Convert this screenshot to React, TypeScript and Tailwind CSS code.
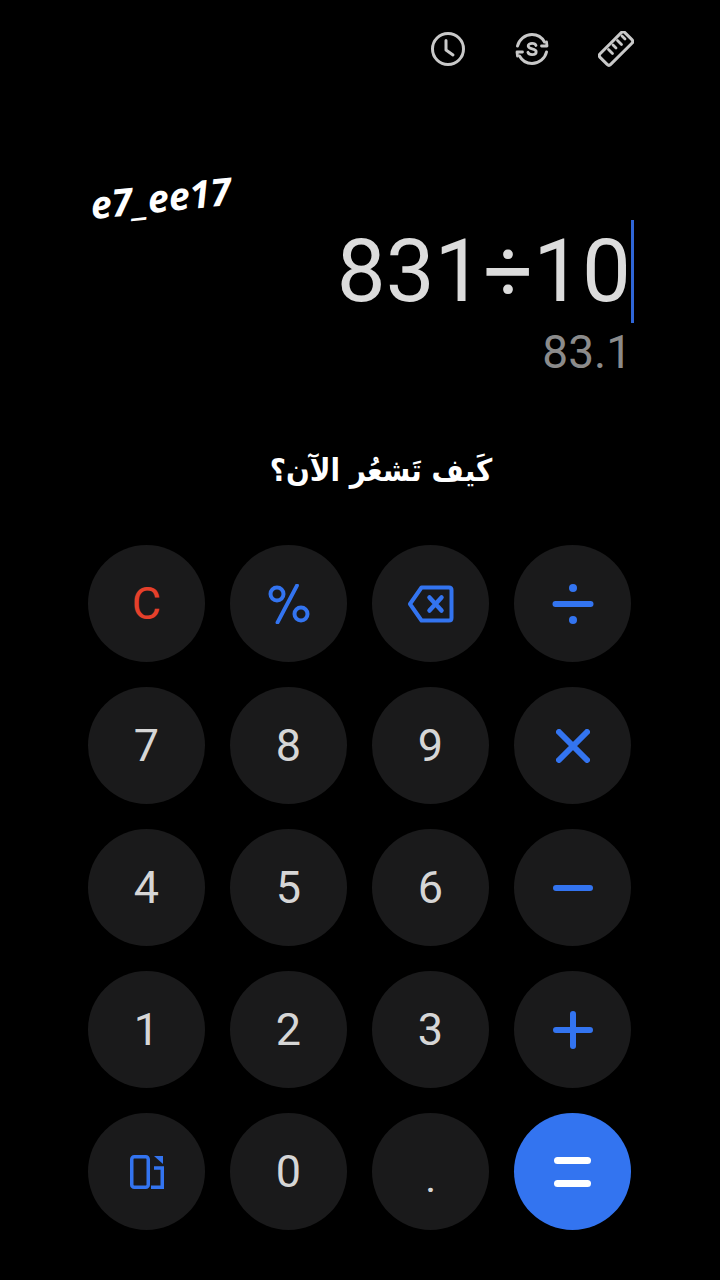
import type { ReactNode } from "react";

const BLUE = "#3374f0";

const IconStroke = ({ children, size = 36, vb = 36 }: { children: ReactNode; size?: number; vb?: number }) => (
  <svg width={size} height={size} viewBox={`0 0 ${vb} ${vb}`} fill="none" stroke="currentColor" strokeLinecap="round" strokeLinejoin="round">
    {children}
  </svg>
);

function ClockIcon() {
  return (
    <IconStroke>
      <circle cx="18" cy="18" r="15.5" strokeWidth="3" />
      <path d="M16 9.500V19l7 5" strokeWidth="3" />
    </IconStroke>
  );
}

function CurrencyIcon() {
  return (
    <IconStroke>
      <path d="M3.500 15C5 8.500 11 3.500 18 3.500c5.500 0 10 3 12.500 7.500" strokeWidth="3" />
      <path d="M27.500 15h5.500l-.5-4" strokeWidth="2.800" />
      <path d="M32.500 21C31 27.500 25 32.500 18 32.500c-5.500 0-10-3-12.500-7.500" strokeWidth="3" />
      <path d="M8.500 21H3l.5 4" strokeWidth="2.800" />
      <path d="M22 14.500c-.4-1.300-1.900-2.100-3.900-2.100-2.300 0-3.900 1.100-3.900 2.700 0 3.600 8 1.900 8 5.600 0 1.700-1.700 2.900-4.100 2.900-2.100 0-3.700-.8-4.200-2.300" strokeWidth="2.800" />
    </IconStroke>
  );
}

function RulerIcon() {
  return (
    <IconStroke>
      <rect x="0.5" y="10" width="35" height="15" rx="2.500" transform="rotate(-45 18 17.500)" strokeWidth="3" />
      <path d="M10.500 18.500l4 4M15 14l3 3M19.500 9.500l4 4M24 5l3 3" strokeWidth="2.800" />
    </IconStroke>
  );
}

function BackspaceIcon() {
  return (
    <svg width="46" height="38" viewBox="0 0 46 38" fill="none" stroke={BLUE} strokeLinecap="round" strokeLinejoin="round">
      <path d="M13.500 2.500H41c1.500 0 2.500 1 2.500 2.500v28c0 1.500-1 2.500-2.500 2.500H13.500L2 19z" strokeWidth="4" />
      <path d="M21.500 12.500l12 13M33.500 12.500l-12 13" strokeWidth="4.500" />
    </svg>
  );
}

function PercentIcon() {
  return (
    <svg width="42" height="40" viewBox="0 0 42 40" fill="none" stroke={BLUE} strokeLinecap="round">
      <circle cx="9" cy="10" r="6.500" strokeWidth="4" />
      <circle cx="33" cy="30" r="6.500" strokeWidth="4" />
      <path d="M29 1.500L9.500 38.500" strokeWidth="3.800" />
    </svg>
  );
}

function DivideIcon() {
  return (
    <svg width="42" height="40" viewBox="0 0 42 40" fill={BLUE}>
      <circle cx="21" cy="4" r="4" />
      <rect x="0.500" y="17" width="41" height="6" rx="3" />
      <circle cx="21" cy="36" r="4" />
    </svg>
  );
}

function TimesIcon() {
  return (
    <svg width="34" height="34" viewBox="0 0 34 34" fill="none" stroke={BLUE} strokeWidth="6" strokeLinecap="round">
      <path d="M3 3l28 28M31 3L3 31" />
    </svg>
  );
}

function MinusIcon() {
  return <div className="h-[6px] w-[40px] rounded-full bg-[#3374f0]" />;
}

function PlusIcon() {
  return (
    <svg width="40" height="38" viewBox="0 0 40 38" fill="none" stroke={BLUE} strokeWidth="6" strokeLinecap="round">
      <path d="M3 19h34M20 3v32" />
    </svg>
  );
}

function ModeIcon() {
  return (
    <svg width="34" height="34" viewBox="0 0 34 34" fill="none" stroke={BLUE} strokeWidth="3.500">
      <rect x="1.750" y="1.750" width="16.500" height="30.500" rx="2.500" />
      <path d="M24 13h8.250v19.250H21" />
      <path d="M24 1l9 0v8z" fill={BLUE} stroke="none" />
    </svg>
  );
}

function EqualsIcon() {
  return (
    <div className="flex flex-col gap-[16px]">
      <div className="h-[7px] w-[37px] rounded-full bg-white" />
      <div className="h-[7px] w-[37px] rounded-full bg-white" />
    </div>
  );
}

function Key({ children, className = "bg-[#1a1a1b]" }: { children: ReactNode; className?: string }) {
  return (
    <div className={`flex h-[117px] w-[117px] items-center justify-center rounded-full text-[45px] leading-none text-[#d6d6d6] ${className}`}>
      {children}
    </div>
  );
}

export default function App() {
  return (
    <div className="relative h-[1280px] w-[720px] overflow-hidden bg-black font-['Roboto',sans-serif]">
      <div className="mt-[31px] flex h-[36px] items-center justify-end gap-[48px] pr-[86px] text-[#c9c9c9]">
        <ClockIcon />
        <CurrencyIcon />
        <RulerIcon />
      </div>

      {/* watermark */}
      <div className="absolute left-[90px] top-[172px] rotate-[-6deg] font-['Open_Sans',sans-serif] text-[38px] font-bold italic leading-[50px] text-white">
        e7_ee17
      </div>

      <div className="mt-[153px] flex items-center justify-end pr-[86px]">
        <span className="text-[87px] leading-[103px] text-[#dcdcdc]">831÷10</span>
        <span className="h-[103px] w-[3px] bg-[#2f66d8]" />
      </div>
      <div className="mt-[2px] pr-[88px] text-right text-[46px] leading-[54px] text-[#8b8b8b]">83.1</div>

      <div dir="rtl" className="mt-[63px] pl-[42px] text-center font-['DejaVu_Sans_Condensed','DejaVu_Sans',sans-serif] text-[31px] font-bold leading-[56px] text-white">
        كَيف تَشعُر الآن؟
      </div>

      <div className="ml-[88px] mt-[47px] grid w-[543px] grid-cols-[repeat(4,117px)] gap-[25px]">
        <Key><span className="text-[#e5402b]">C</span></Key>
        <Key><PercentIcon /></Key>
        <Key><BackspaceIcon /></Key>
        <Key><DivideIcon /></Key>
        <Key>7</Key>
        <Key>8</Key>
        <Key>9</Key>
        <Key><TimesIcon /></Key>
        <Key>4</Key>
        <Key>5</Key>
        <Key>6</Key>
        <Key><MinusIcon /></Key>
        <Key>1</Key>
        <Key>2</Key>
        <Key>3</Key>
        <Key><PlusIcon /></Key>
        <Key><ModeIcon /></Key>
        <Key>0</Key>
        <Key><span className="relative top-[10px] text-[30px] font-bold">.</span></Key>
        <Key className="bg-[#3374f0]"><EqualsIcon /></Key>
      </div>
    </div>
  );
}
